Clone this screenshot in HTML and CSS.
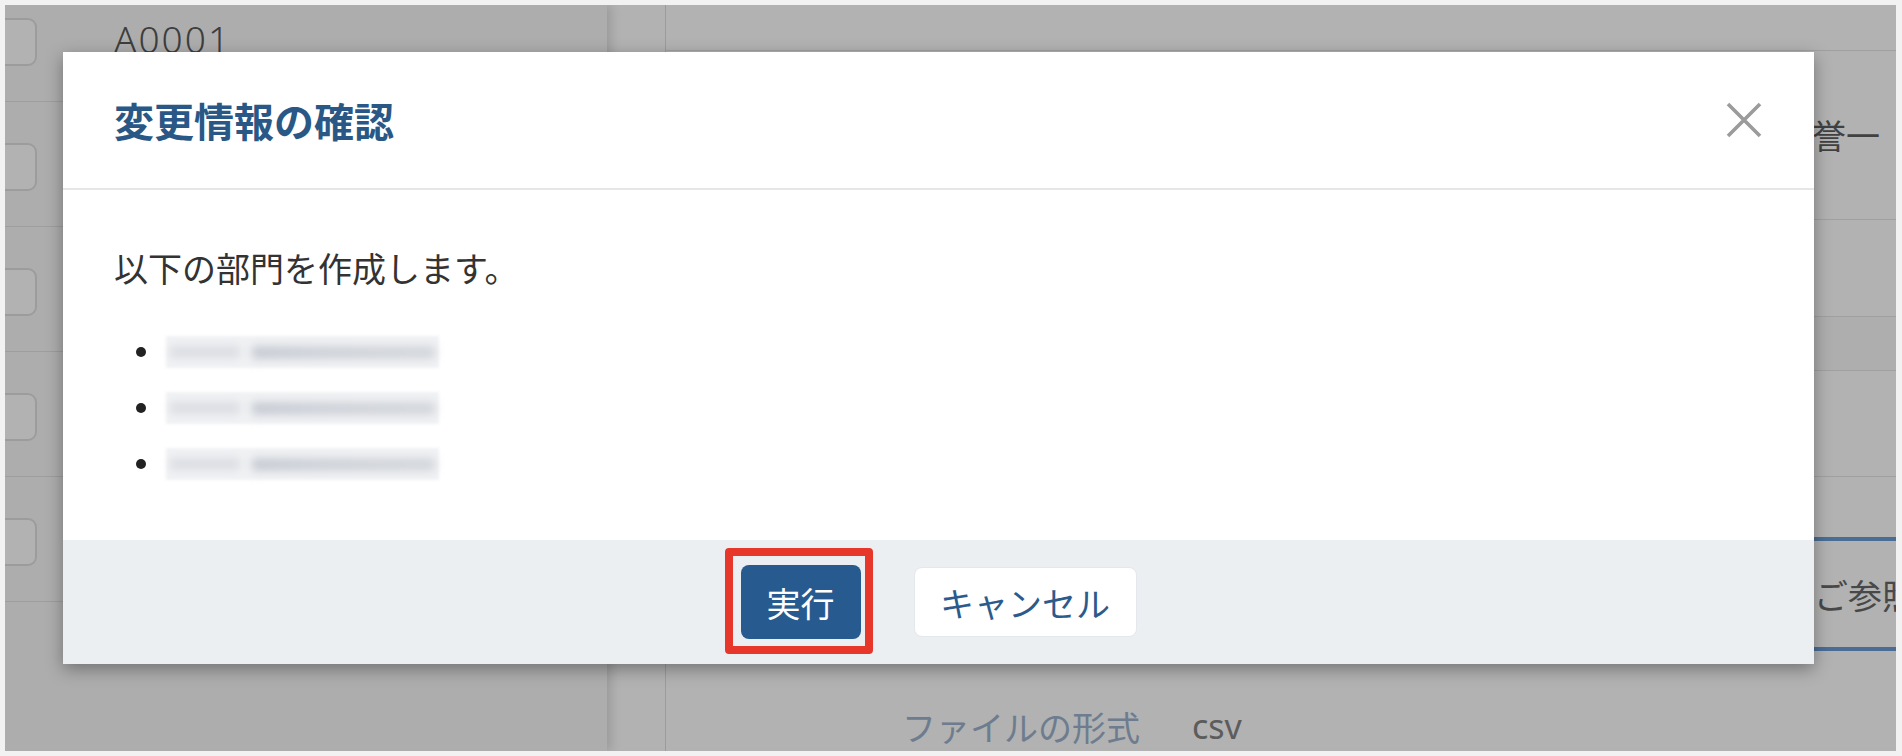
FILE: index.html
```html
<!DOCTYPE html>
<html lang="ja">
<head>
<meta charset="utf-8">
<title>変更情報の確認</title>
<link rel="stylesheet" href="styles.css">
</head>
<body>
<div class="screen">
  <div class="app">
    <aside class="left-panel">
      <div class="rows">
        <div class="row"><span class="box"></span><span class="code">A0001</span></div>
        <div class="row"><span class="box"></span></div>
        <div class="row"><span class="box"></span></div>
        <div class="row"><span class="box"></span></div>
        <div class="row"><span class="box"></span></div>
      </div>
    </aside>
    <div class="gutter"></div>
    <main class="content">
      <div class="c-top"></div>
      <div class="c-row c-name"><span>誉一</span></div>
      <div class="c-row c-r2"></div>
      <div class="c-row c-band"></div>
      <div class="c-row c-r4"></div>
      <div class="notice"><p>ご参照ください。</p></div>
      <div class="file-row"><span class="file-label">ファイルの形式</span><span class="file-value">csv</span></div>
    </main>
  </div>

  <div class="overlay"></div>

  <div class="modal">
    <div class="modal-header">
      <h2 class="modal-title">変更情報の確認</h2>
      <button class="close" aria-label="閉じる">
        <svg width="36" height="36" viewBox="0 0 36 36"><path d="M2 2 L34 34 M34 2 L2 34" stroke="#9b9b9b" stroke-width="3.6" fill="none" stroke-linecap="butt"/></svg>
      </button>
    </div>
    <div class="modal-body">
      <p class="lead">以下の部門を作成します。</p>
      <ul class="dept-list">
        <li><span class="dot"></span><span class="redact"><span class="r1"></span><span class="r2"></span></span></li>
        <li><span class="dot"></span><span class="redact"><span class="r1"></span><span class="r2"></span></span></li>
        <li><span class="dot"></span><span class="redact"><span class="r1"></span><span class="r2"></span></span></li>
      </ul>
    </div>
    <div class="modal-footer">
      <span class="highlight"><button class="btn btn-primary">実行</button></span>
      <button class="btn btn-cancel">キャンセル</button>
    </div>
  </div>
</div>
</body>
</html>
```
FILE: styles.css
```css
* { box-sizing: border-box; }

html, body {
  margin: 0;
  padding: 0;
  background: #f2f2f2;
  font-family: "Noto Sans CJK JP", "Noto Sans", sans-serif;
}

.screen {
  position: relative;
  margin: 5px 6px 5px 5px;
  width: 1891px;
  height: 746px;
  overflow: hidden;
  background: #ffffff;
}

.app {
  display: flex;
  height: 100%;
}

/* left list panel */
.left-panel {
  width: 602px;
  flex: none;
  background: #f8f8f8;
  box-shadow: 4px 0 10px rgba(0, 0, 0, 0.14);
  position: relative;
  z-index: 1;
  overflow: hidden;
}

.rows {
  margin-top: -28px;
}

.row {
  height: 125px;
  border-bottom: 1px solid #e2e2e2;
  display: flex;
  align-items: center;
  padding-top: 6px;
}

.box {
  width: 60px;
  height: 48px;
  margin-left: -28px;
  border: 2px solid #e0e0e0;
  border-radius: 9px;
  background: #ffffff;
}

.code {
  margin-left: 77px;
  margin-bottom: 8px;
  font-size: 37px;
  letter-spacing: 2px;
  color: #585858;
  font-family: "Noto Sans", "Noto Sans CJK JP", sans-serif;
  font-weight: 300;
}

.gutter {
  width: 59px;
  flex: none;
  background: #ffffff;
  border-right: 1px solid #dedede;
}

/* right content */
.content {
  flex: 1;
  display: flex;
  flex-direction: column;
  background: #ffffff;
  overflow: hidden;
}

.c-top {
  height: 46px;
  border-bottom: 1px solid #e6e6e6;
}

.c-row {
  border-bottom: 1px solid #e6e6e6;
  display: flex;
  align-items: center;
}

.c-name {
  height: 170px;
  justify-content: flex-end;
  padding-right: 16px;
  font-size: 34px;
  color: #5e5e5e;
}

.c-r2 { height: 98px; }
.c-band { height: 54px; background: #fafafa; }
.c-r4 { height: 107px; }

.notice {
  margin-top: 60px;
  height: 115px;
  border-top: 4px solid #6a9cd6;
  border-bottom: 4px solid #6a9cd6;
  display: flex;
  align-items: center;
  white-space: nowrap;
}

.notice p {
  margin: 0;
  padding-left: 1148px;
  font-size: 34px;
  color: #676767;
}

.file-row {
  margin-top: 50px;
  height: 50px;
  display: flex;
  align-items: center;
  padding-left: 236px;
  font-size: 34px;
}

.file-label { color: #9db4cd; }
.file-value {
  margin-left: 52px;
  color: #858585;
  font-family: "Noto Sans", sans-serif;
}

/* dim overlay */
.overlay {
  position: absolute;
  inset: 0;
  background: rgba(0, 0, 0, 0.3);
  z-index: 5;
}

/* modal dialog */
.modal {
  position: absolute;
  left: 58px;
  top: 47px;
  width: 1751px;
  height: 612px;
  background: #ffffff;
  z-index: 10;
  display: flex;
  flex-direction: column;
  box-shadow: 0 5px 16px rgba(0, 0, 0, 0.35);
}

.modal-header {
  height: 138px;
  flex: none;
  border-bottom: 2px solid #e6e6e6;
  display: flex;
  align-items: center;
  justify-content: space-between;
  padding: 0 52px 0 51px;
}

.modal-title {
  margin: 0;
  font-size: 40px;
  font-weight: 700;
  color: #2a5886;
  line-height: 1;
}

.close {
  width: 36px;
  height: 36px;
  padding: 0;
  border: 0;
  background: transparent;
  display: block;
}

.close svg { display: block; }

.modal-body {
  flex: 1;
  padding: 53px 51px 0;
}

.lead {
  margin: 0;
  font-size: 34px;
  line-height: 50px;
  color: #333333;
}

.dept-list {
  list-style: none;
  margin: 31px 0 0;
  padding: 0 0 0 22px;
}

.dept-list li {
  height: 56px;
  display: flex;
  align-items: center;
}

.dot {
  width: 10px;
  height: 10px;
  border-radius: 50%;
  background: #222222;
  margin-right: 20px;
}

.redact {
  width: 273px;
  height: 32px;
  background: #f1f2f4;
  filter: blur(1.5px);
  display: flex;
  align-items: center;
  gap: 12px;
  padding: 0 4px;
}

.r1 {
  width: 70px;
  height: 12px;
  background: #dadde2;
  filter: blur(4px);
}

.r2 {
  flex: 1;
  height: 13px;
  background: linear-gradient(90deg, #c6cbd2 0%, #cdd1d8 35%, #d3d6db 100%);
  filter: blur(4px);
}

.modal-footer {
  height: 124px;
  flex: none;
  background: #ebeff2;
  display: flex;
  align-items: center;
  justify-content: center;
  gap: 53px;
}

.btn {
  font-family: "Noto Sans CJK JP", "Noto Sans", sans-serif;
  font-size: 34px;
  border: 0;
  border-radius: 8px;
  padding: 0;
  display: flex;
  align-items: center;
  justify-content: center;
  cursor: pointer;
}

.highlight {
  position: relative;
  display: block;
}

.highlight::after {
  content: "";
  position: absolute;
  top: -17px;
  left: -16px;
  right: -12px;
  bottom: -15px;
  border: 8px solid #e7372a;
  border-radius: 4px;
  pointer-events: none;
}

.btn-primary {
  width: 120px;
  height: 74px;
  background: #275a8f;
  color: #ffffff;
}

.btn-cancel {
  width: 223px;
  height: 70px;
  background: #ffffff;
  color: #2b5b8c;
  border: 1px solid #e4e8ec;
}
```
